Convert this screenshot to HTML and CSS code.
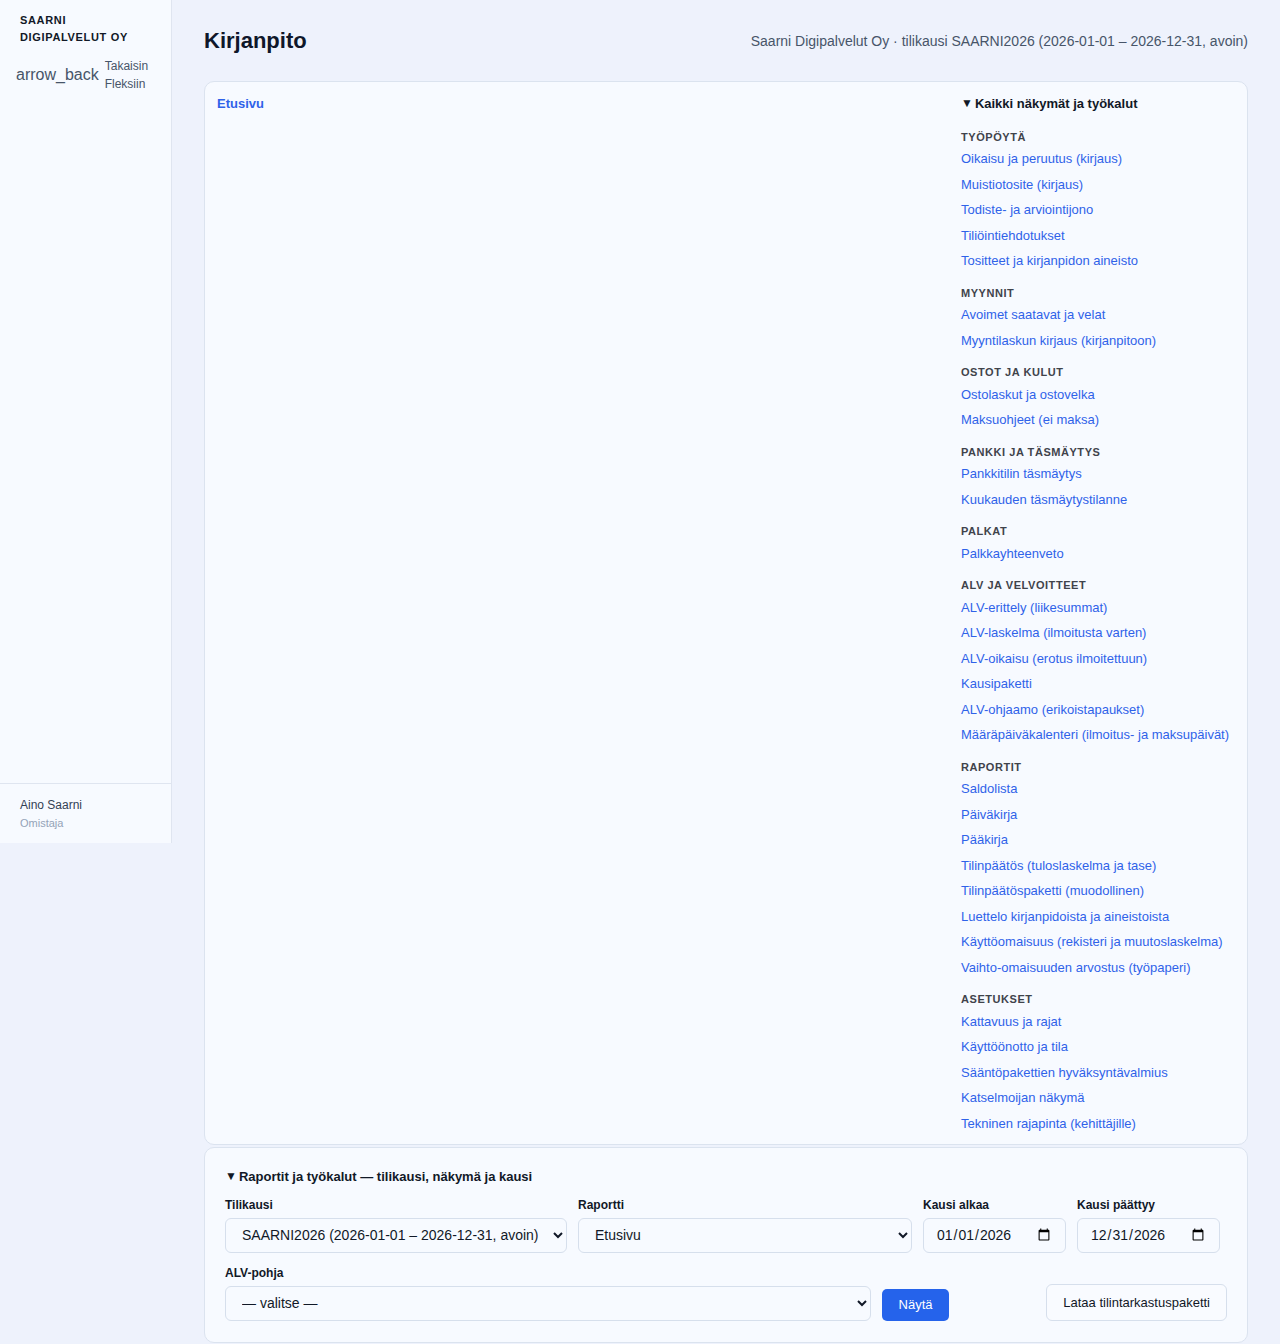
FILE: index.html
```html
<!DOCTYPE html>
<html lang="fi">
<head>
  <meta charset="UTF-8" />
  <meta name="viewport" content="width=device-width, initial-scale=1.0" />
  <title>Kirjanpito | Saarni Digipalvelut Oy</title>
  <link rel="stylesheet" href="styles.css">
</head>
<body>
  <aside class="sidebar">
    <div class="brand">Saarni Digipalvelut Oy</div>
    <a class="back-link" href="#">
      <span class="material-icon">arrow_back</span>
      <span class="back-text">Takaisin Fleksiin</span>
    </a>
    <div class="user">
      <div class="user-name">Aino Saarni</div>
      <div class="user-role">Omistaja</div>
    </div>
  </aside>

  <main class="content">
    <header class="page-header">
      <h1>Kirjanpito</h1>
      <div class="page-meta">Saarni Digipalvelut Oy · tilikausi SAARNI2026 (2026-01-01 – 2026-12-31, avoin)</div>
    </header>

    <section class="card view-card">
      <div class="view-main">
        <a class="crumb" href="#">Etusivu</a>
      </div>
      <details class="view-nav" open>
        <summary>Kaikki näkymät ja työkalut</summary>

        <div class="nav-group">
          <div class="nav-title">Työpöytä</div>
          <a href="#">Oikaisu ja peruutus (kirjaus)</a>
          <a href="#">Muistiotosite (kirjaus)</a>
          <a href="#">Todiste- ja arviointijono</a>
          <a href="#">Tiliöintiehdotukset</a>
          <a href="#">Tositteet ja kirjanpidon aineisto</a>
        </div>
        <div class="nav-group">
          <div class="nav-title">Myynnit</div>
          <a href="#">Avoimet saatavat ja velat</a>
          <a href="#">Myyntilaskun kirjaus (kirjanpitoon)</a>
        </div>
        <div class="nav-group">
          <div class="nav-title">Ostot ja kulut</div>
          <a href="#">Ostolaskut ja ostovelka</a>
          <a href="#">Maksuohjeet (ei maksa)</a>
        </div>
        <div class="nav-group">
          <div class="nav-title">Pankki ja täsmäytys</div>
          <a href="#">Pankkitilin täsmäytys</a>
          <a href="#">Kuukauden täsmäytystilanne</a>
        </div>
        <div class="nav-group">
          <div class="nav-title">Palkat</div>
          <a href="#">Palkkayhteenveto</a>
        </div>
        <div class="nav-group">
          <div class="nav-title">ALV ja velvoitteet</div>
          <a href="#">ALV-erittely (liikesummat)</a>
          <a href="#">ALV-laskelma (ilmoitusta varten)</a>
          <a href="#">ALV-oikaisu (erotus ilmoitettuun)</a>
          <a href="#">Kausipaketti</a>
          <a href="#">ALV-ohjaamo (erikoistapaukset)</a>
          <a href="#">Määräpäiväkalenteri (ilmoitus- ja maksupäivät)</a>
        </div>
        <div class="nav-group">
          <div class="nav-title">Raportit</div>
          <a href="#">Saldolista</a>
          <a href="#">Päiväkirja</a>
          <a href="#">Pääkirja</a>
          <a href="#">Tilinpäätös (tuloslaskelma ja tase)</a>
          <a href="#">Tilinpäätöspaketti (muodollinen)</a>
          <a href="#">Luettelo kirjanpidoista ja aineistoista</a>
          <a href="#">Käyttöomaisuus (rekisteri ja muutoslaskelma)</a>
          <a href="#">Vaihto-omaisuuden arvostus (työpaperi)</a>
        </div>
        <div class="nav-group">
          <div class="nav-title">Asetukset</div>
          <a href="#">Kattavuus ja rajat</a>
          <a href="#">Käyttöönotto ja tila</a>
          <a href="#">Sääntöpakettien hyväksyntävalmius</a>
          <a href="#">Katselmoijan näkymä</a>
          <a href="#">Tekninen rajapinta (kehittäjille)</a>
        </div>
      </details>
    </section>

    <section class="card filter-card">
      <details open>
        <summary>Raportit ja työkalut — tilikausi, näkymä ja kausi</summary>
        <form class="filters">
          <div class="filter-row">
            <label class="field field-period">
              <span>Tilikausi</span>
              <select>
                <option>SAARNI2026 (2026-01-01 – 2026-12-31, avoin)</option>
              </select>
            </label>
            <label class="field field-report">
              <span>Raportti</span>
              <select>
                <option>Etusivu</option>
              </select>
            </label>
            <label class="field field-date">
              <span>Kausi alkaa</span>
              <input type="date" value="2026-01-01">
            </label>
            <label class="field field-date">
              <span>Kausi päättyy</span>
              <input type="date" value="2026-12-31">
            </label>
          </div>
          <div class="filter-row row-bottom">
            <label class="field field-vat">
              <span>ALV-pohja</span>
              <select>
                <option>— valitse —</option>
              </select>
            </label>
            <button type="button" class="btn-primary">Näytä</button>
            <button type="button" class="btn-secondary">Lataa tilintarkastuspaketti</button>
          </div>
        </form>
      </details>
    </section>
  </main>
</body>
</html>
```

FILE: styles.css
```css
body {
  font-family: 'Liberation Sans', Arial, sans-serif;
  background: #eef2fc;
  color: #0f172a;
  margin: 0;
  padding: 0;
  display: flex;
  align-items: flex-start;
  min-height: 100vh;
}
a {
  color: #2f62e9;
  text-decoration: none;
}

/* sivupalkki */
.sidebar {
  width: 171px;
  height: 843px;
  flex-shrink: 0;
  background: #f7faff;
  border-right: 1px solid #dfe5f0;
  display: flex;
  flex-direction: column;
  box-sizing: content-box;
}
.brand {
  padding: 12px 20px 0;
  font-size: 11px;
  font-weight: 700;
  line-height: 17px;
  letter-spacing: 0.06em;
  text-transform: uppercase;
  color: #111827;
}
.back-link {
  display: flex;
  align-items: center;
  gap: 6px;
  padding: 11px 16px 0;
  color: #475569;
}
.material-icon {
  font-size: 16px;
}
.back-text {
  font-size: 12px;
  line-height: 18px;
  width: 50px;
}
.user {
  margin-top: auto;
  border-top: 1px solid #dfe5f0;
  padding: 13px 20px 10px;
}
.user-name {
  font-size: 12px;
  line-height: 16px;
  color: #334155;
}
.user-role {
  font-size: 11px;
  line-height: 20px;
  color: #94a3b8;
}

/* sisältö */
.content {
  flex: 1;
  padding: 28px 32px 0;
  min-width: 0;
}
.page-header {
  display: flex;
  justify-content: space-between;
  align-items: center;
  margin-bottom: 27px;
}
.page-header h1 {
  font-size: 22px;
  line-height: 26px;
  margin: 0;
  color: #0f172a;
}
.page-meta {
  font-size: 14px;
  color: #475569;
}
.card {
  background: #f7faff;
  border: 1px solid #dbe3ef;
  border-radius: 10px;
}
.view-card {
  display: flex;
  justify-content: space-between;
  padding: 13px 12px 7px;
  margin-bottom: 2px;
}
.crumb {
  font-size: 13px;
  font-weight: 700;
  line-height: 18px;
  position: relative;
  top: -1px;
}
.view-nav {
  width: 274px;
}
summary {
  font-size: 13px;
  font-weight: 700;
  line-height: 18px;
  color: #111827;
  cursor: pointer;
  list-style: none;
}
summary::before {
  content: "▼";
  font-size: 12px;
  margin-right: 2px;
  position: relative;
  top: -1px;
}
.view-nav summary {
  padding-bottom: 5px;
}
.nav-group {
  margin-top: 11.5px;
}
.nav-title {
  font-size: 11px;
  font-weight: 700;
  line-height: 14px;
  letter-spacing: 0.05em;
  text-transform: uppercase;
  color: #3f434b;
  margin-bottom: 3px;
}
.nav-group a {
  display: block;
  font-size: 13px;
  line-height: 18px;
  padding: 3.75px 0;
}

/* suodattimet */
.filter-card {
  padding: 20px 20px 21px;
}
.filters {
  margin-top: 11px;
}
.filter-row {
  display: flex;
  gap: 11px;
}
.row-bottom {
  margin-top: 12px;
  align-items: flex-end;
}
.field {
  display: flex;
  flex-direction: column;
  gap: 5px;
}
.field span {
  font-size: 12px;
  font-weight: 700;
  line-height: 16px;
  color: #111827;
}
.field select,
.field input {
  height: 35px;
  box-sizing: border-box;
  border: 1px solid #d6dfec;
  border-radius: 6px;
  background: #f7faff;
  font-family: inherit;
  font-size: 14px;
  color: #111827;
  padding: 0 8px 0 12px;
}
.field input {
  padding: 0 12px 0 12px;
}
.field-period select { width: 342px; }
.field-report select { width: 334px; }
.field-date input { width: 143px; }
.field-vat select { width: 646px; }
.btn-primary {
  background: #2563eb;
  color: #fff;
  border: none;
  border-radius: 5px;
  height: 32px;
  width: 67px;
  font-family: inherit;
  font-size: 13px;
  cursor: pointer;
}
.btn-secondary {
  margin-left: auto;
  background: #f9fbff;
  color: #111827;
  border: 1px solid #d6dfec;
  border-radius: 6px;
  height: 37px;
  padding: 0 16px;
  font-family: inherit;
  font-size: 13px;
  cursor: pointer;
}
```
